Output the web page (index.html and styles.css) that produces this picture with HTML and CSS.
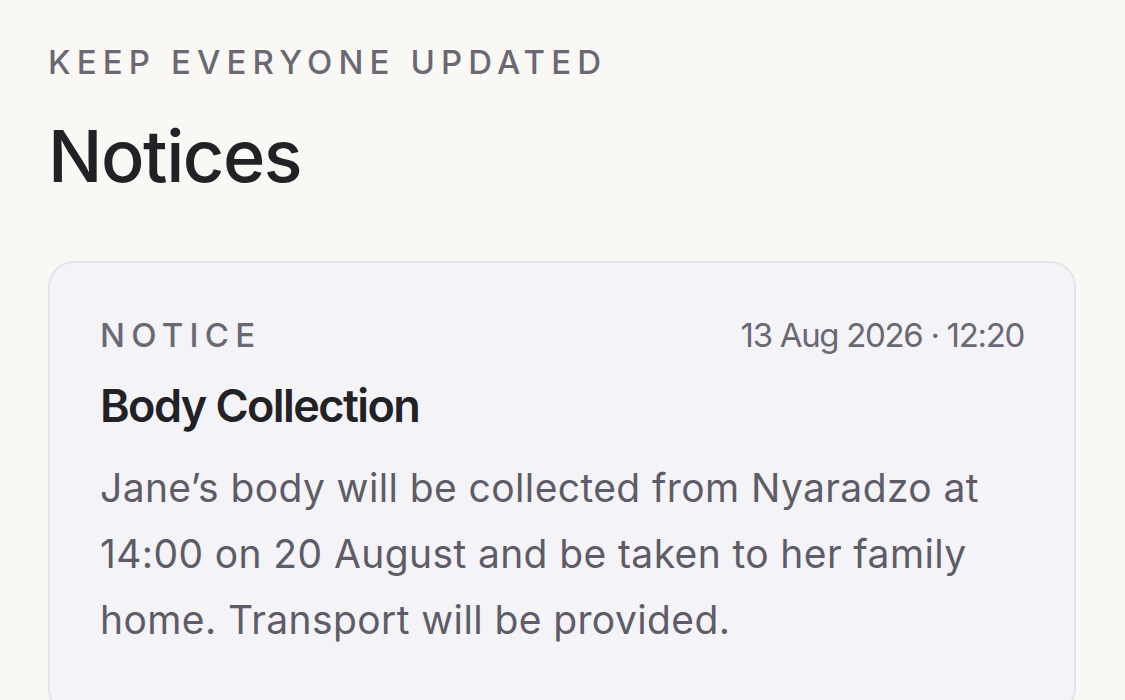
FILE: index.html
```html
<!DOCTYPE html>
<html lang="en">
<head>
    <meta charset="UTF-8">
    <meta name="viewport" content="width=device-width, initial-scale=1.0">
    <title>Notices</title>
    <link rel="stylesheet" href="styles.css">
</head>
<body>
    <section class="notices">
        <p class="eyebrow">Keep everyone updated</p>
        <h1 class="page-title">Notices</h1>

        <article class="notice-card">
            <div class="notice-head">
                <span class="notice-tag">Notice</span>
                <span class="notice-date">13 Aug 2026 · 12:20</span>
            </div>
            <h2 class="notice-title">Body Collection</h2>
            <p class="notice-body">Jane’s body will be collected from Nyaradzo at 14:00 on 20 August and be taken to her family home. Transport will be provided.</p>
        </article>
    </section>
</body>
</html>
```

FILE: styles.css
```css
/* Reset and base styles */
* {
    margin: 0;
    padding: 0;
    box-sizing: border-box;
}
body {
    font-family: Inter, "Noto Sans", sans-serif;
    color: #222126;
    background-color: #f9f8f5;
}

/* Page header */
.notices {
    padding: 42px 49px 0 48px;
}
.eyebrow {
    font-size: 33px;
    line-height: 40px;
    font-weight: 500;
    letter-spacing: 0.185em;
    text-transform: uppercase;
    color: #6b6874;
}
.page-title {
    margin-top: 31px;
    font-size: 72px;
    line-height: 86px;
    font-weight: 500;
    letter-spacing: -0.02em;
    color: #222126;
}

/* Notice card */
.notice-card {
    margin-top: 62px;
    background-color: #f4f3f8;
    border: 2px solid #e6e4eb;
    border-radius: 26px;
    padding: 52px 50px 60px;
}
.notice-head {
    display: flex;
    justify-content: space-between;
    align-items: baseline;
}
.notice-tag {
    font-size: 33px;
    line-height: 40px;
    font-weight: 500;
    letter-spacing: 0.19em;
    text-transform: uppercase;
    color: #6b6874;
}
.notice-date {
    font-size: 33px;
    line-height: 40px;
    color: #6b6874;
    letter-spacing: -0.04em;
}
.notice-title {
    margin-top: 22px;
    font-size: 45px;
    line-height: 58px;
    font-weight: 600;
    letter-spacing: -0.035em;
    color: #222126;
}
.notice-body {
    margin-top: 20px;
    font-size: 39px;
    line-height: 66px;
    color: #5e5c67;
    letter-spacing: 0.01em;
}
```
